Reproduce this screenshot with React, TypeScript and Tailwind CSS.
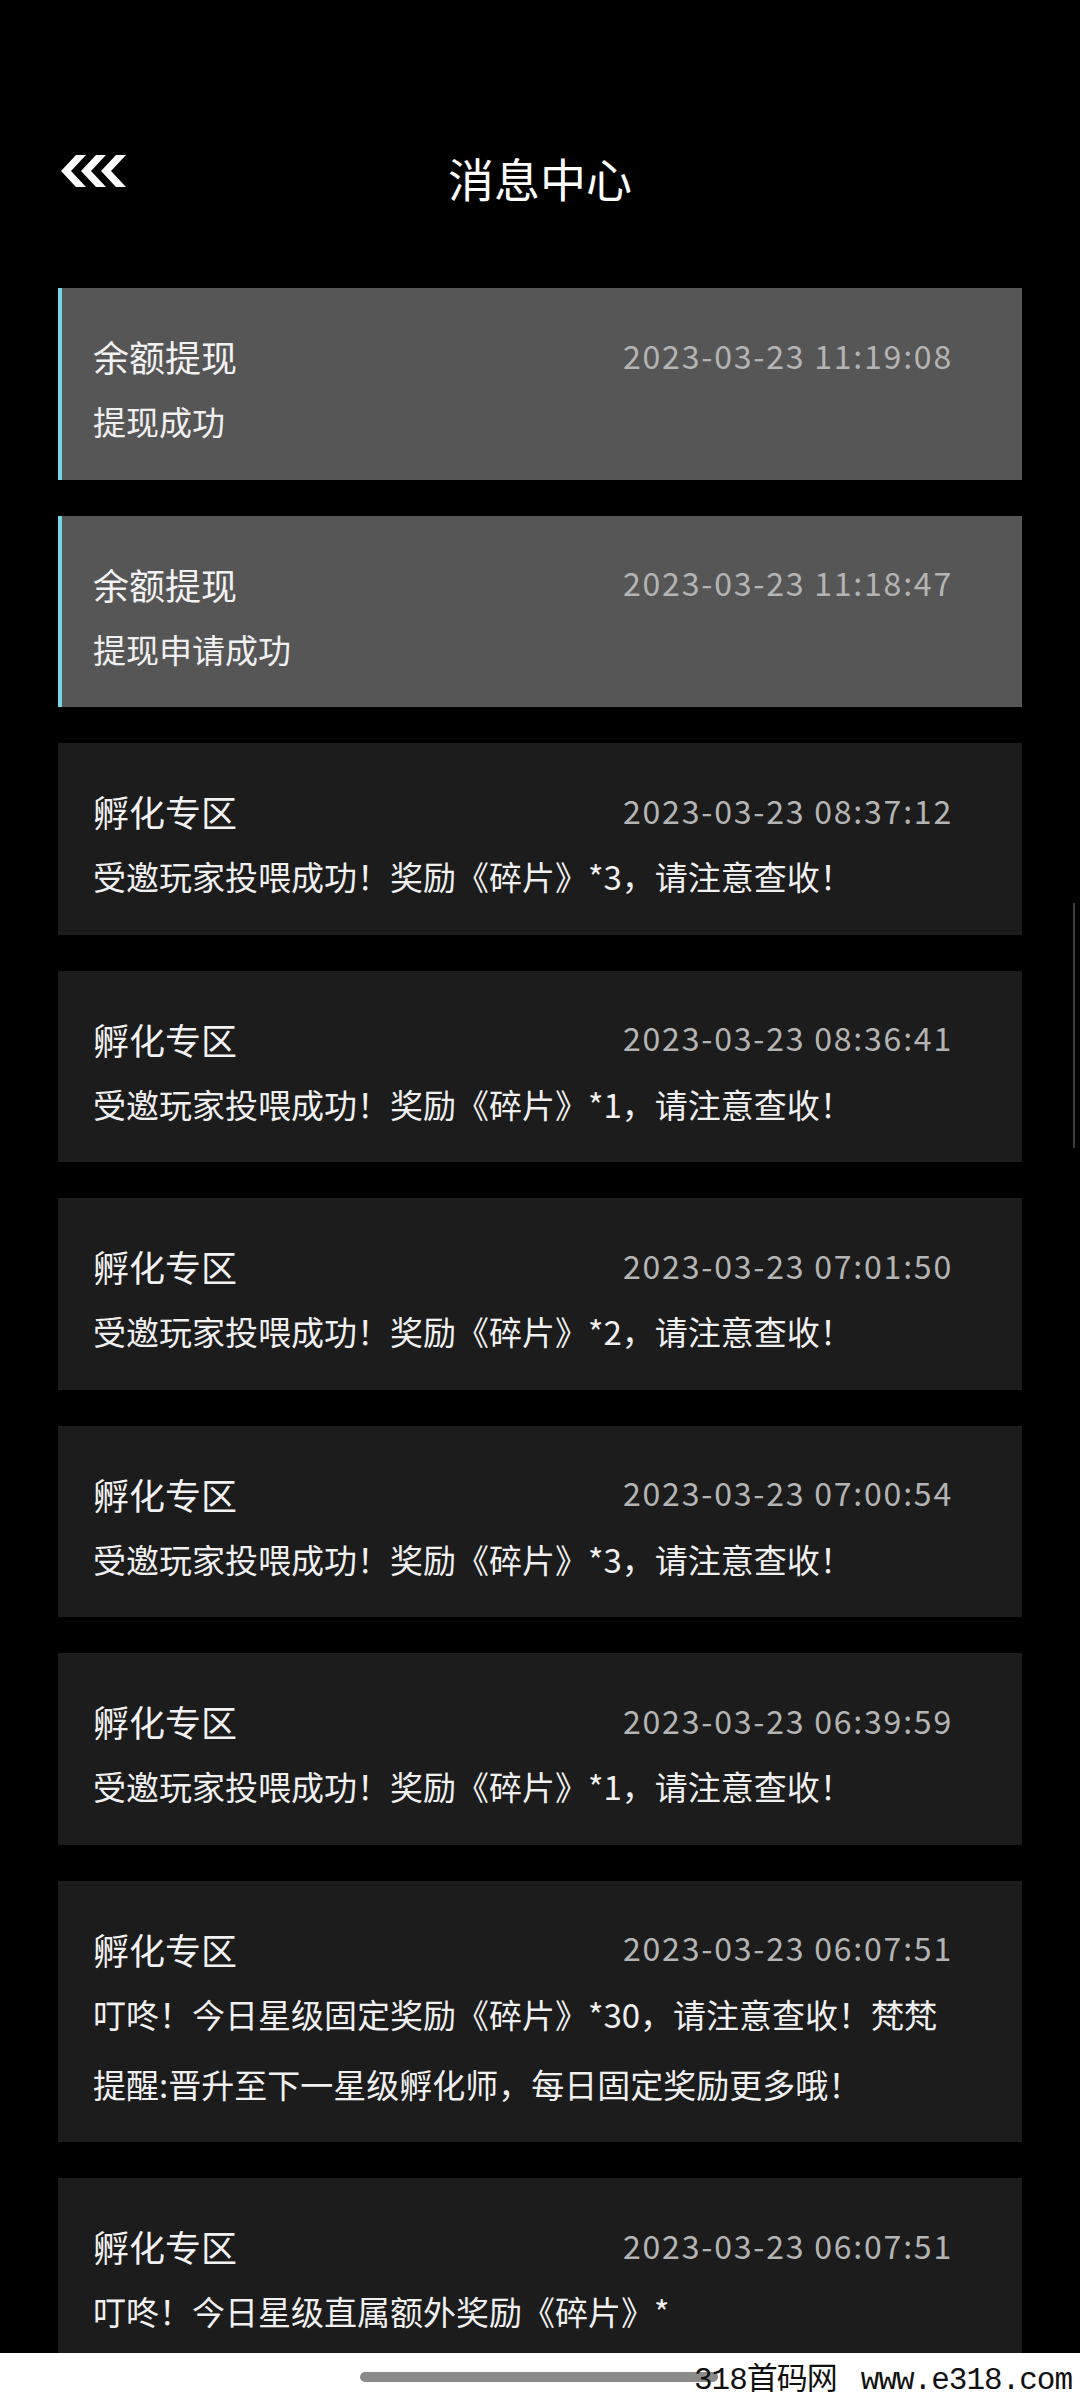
type Message = {
  title: string;
  time: string;
  lines: string[];
  highlight?: boolean;
};

const messages: Message[] = [
  { title: "余额提现", time: "2023-03-23 11:19:08", lines: ["提现成功"], highlight: true },
  { title: "余额提现", time: "2023-03-23 11:18:47", lines: ["提现申请成功"], highlight: true },
  { title: "孵化专区", time: "2023-03-23 08:37:12", lines: ["受邀玩家投喂成功！奖励《碎片》*3，请注意查收！"] },
  { title: "孵化专区", time: "2023-03-23 08:36:41", lines: ["受邀玩家投喂成功！奖励《碎片》*1，请注意查收！"] },
  { title: "孵化专区", time: "2023-03-23 07:01:50", lines: ["受邀玩家投喂成功！奖励《碎片》*2，请注意查收！"] },
  { title: "孵化专区", time: "2023-03-23 07:00:54", lines: ["受邀玩家投喂成功！奖励《碎片》*3，请注意查收！"] },
  { title: "孵化专区", time: "2023-03-23 06:39:59", lines: ["受邀玩家投喂成功！奖励《碎片》*1，请注意查收！"] },
  {
    title: "孵化专区",
    time: "2023-03-23 06:07:51",
    lines: ["叮咚！今日星级固定奖励《碎片》*30，请注意查收！梵梵", "提醒:晋升至下一星级孵化师，每日固定奖励更多哦！"],
  },
  {
    title: "孵化专区",
    time: "2023-03-23 06:07:51",
    lines: ["叮咚！今日星级直属额外奖励《碎片》*"],
  },
];

function BackIcon() {
  return (
    <svg width="66" height="32" viewBox="0 0 66 32" fill="#ffffff">
      {[0, 20, 40].map((x) => (
        <polygon
          key={x}
          points={`${x},16 ${x + 15},0 ${x + 25},0 ${x + 10},16 ${x + 25},32 ${x + 15},32`}
        />
      ))}
    </svg>
  );
}

function MessageCard({ msg }: { msg: Message }) {
  return (
    <div
      className={
        msg.highlight
          ? "bg-[#565656] border-l-[4px] border-[#74d8e3] pl-[31px] pr-[69px] pt-[38px] pb-[23.5px]"
          : "bg-[#1c1c1c] pl-[35px] pr-[69px] pt-[38px] pb-[23.5px]"
      }
    >
      <div className="flex items-center justify-between h-[60px]">
        <span className="text-[36px] text-[#f2f2f2] leading-[60px]">{msg.title}</span>
        <span className="text-[32px] tracking-[1.8px] text-[#b4b4b4] leading-[60px] -mt-[3px]">{msg.time}</span>
      </div>
      {msg.lines.map((line, i) => (
        <div key={i} className="text-[33px] leading-[70px] text-[#f0f0f0] whitespace-nowrap">
          {line}
        </div>
      ))}
    </div>
  );
}

export default function App() {
  return (
    <div
      className="relative w-[1080px] h-[2400px] overflow-hidden bg-black"
      style={{ fontFamily: '"Noto Sans CJK SC", "Noto Sans", sans-serif' }}
    >
      <div className="grid grid-cols-[1fr_auto_1fr] pt-[146px] h-[288px] items-start">
        <div className="pl-[61px] pt-[9px]">
          <BackIcon />
        </div>
        <h1 className="text-[46px] leading-[62px] text-white">消息中心</h1>
        <div />
      </div>

      <div className="flex flex-col gap-[36px] px-[58px]">
        {messages.map((m, i) => (
          <MessageCard key={i} msg={m} />
        ))}
      </div>

      {/* scroll indicator */}
      <div className="absolute left-[1073px] top-[903px] w-[2px] h-[245px] bg-[#33403f]" />

      {/* system nav bar */}
      <div className="absolute left-0 bottom-0 w-full h-[47px] bg-white">
        <div className="absolute left-[360px] top-[19px] w-[358px] h-[10px] rounded-full bg-[#8a8a8a]" />
        <div
          className="absolute left-[694px] top-[10px] flex items-baseline gap-[24px] text-[#111] text-[31px] leading-[36px] whitespace-nowrap"
          style={{ fontFamily: '"Liberation Mono", "Noto Sans CJK SC", monospace' }}
        >
          <span className="tracking-[-1px]">318首码网</span>
          <span className="tracking-[-1px]">www.e318.com</span>
        </div>
      </div>
    </div>
  );
}
